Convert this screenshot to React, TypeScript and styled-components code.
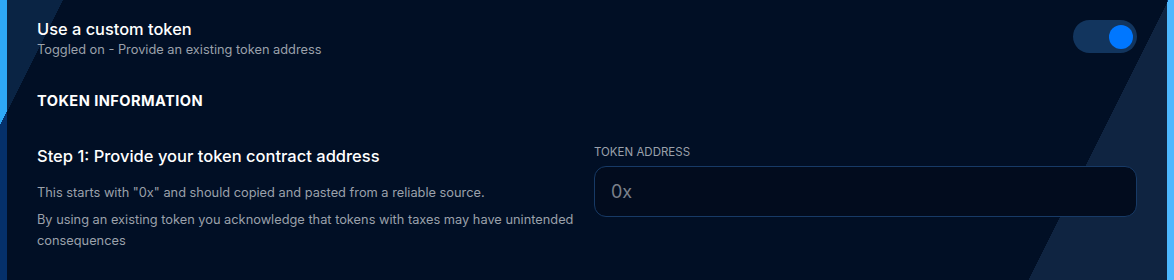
import styled, { createGlobalStyle } from 'styled-components';

const GlobalStyle = createGlobalStyle`
  html, body {
    margin: 0;
    padding: 0;
  }
  body {
    font-family: Inter, 'Noto Sans', sans-serif;
    background: #010f25;
  }
`;

const Page = styled.div`
  height: 280px;
  padding: 0 7px;
  overflow: hidden;
  background: linear-gradient(
    116.57deg,
    #2ea8f6 56px,
    #05306a 56px,
    #05306a 1045px,
    #4db8ff 1045px
  );
`;

const Panel = styled.section`
  height: 100%;
  box-sizing: border-box;
  padding: 19px 30px 0;
  color: #fff;
  background: linear-gradient(
    116.57deg,
    #0a2444 50px,
    #010f25 50px,
    #010f25 1039px,
    #0f2441 1039px
  );
`;

const ToggleRow = styled.div`
  display: flex;
  align-items: flex-start;
  justify-content: space-between;
`;

const Title = styled.h3`
  margin: 0;
  font-size: 16.4px;
  font-weight: 500;
  line-height: 20px;
`;

const Hint = styled.p`
  margin: 2px 0 0;
  font-size: 12.8px;
  line-height: 18px;
  color: #9ba1ab;
`;

const Switch = styled.button<{ $on: boolean }>`
  width: 64px;
  height: 33px;
  margin-top: 1px;
  padding: 0 4px;
  border: none;
  border-radius: 17px;
  background: #12355e;
  display: flex;
  align-items: center;
  justify-content: ${(p) => (p.$on ? 'flex-end' : 'flex-start')};
  cursor: pointer;

  &::after {
    content: '';
    width: 24px;
    height: 24px;
    border-radius: 50%;
    background: #0077ff;
  }
`;

const Section = styled.h4`
  margin: 32px 0 0;
  font-size: 14.6px;
  font-weight: 700;
  line-height: 20px;
  letter-spacing: 0.45px;
`;

const Columns = styled.div`
  display: grid;
  grid-template-columns: 1fr 1fr;
  column-gap: 14px;
  margin-top: 34px;
`;

const StepTitle = styled.h3`
  margin: 0;
  font-size: 16.5px;
  font-weight: 500;
  line-height: 22px;
`;

const Body = styled.p`
  margin: 15px 0 0;
  font-size: 12.8px;
  line-height: 21.5px;
  color: #9ba1ab;

  & + & {
    margin-top: 5px;
  }
`;

const Label = styled.label`
  display: block;
  font-size: 11.5px;
  line-height: 14px;
  text-transform: uppercase;
  color: #9ba1ab;
`;

const Input = styled.input`
  display: block;
  width: 100%;
  height: 51px;
  margin-top: 7px;
  box-sizing: border-box;
  padding: 0 16px;
  border: 1px solid #173a66;
  border-radius: 12px;
  background: #020c1e;
  color: #fff;
  font-family: inherit;
  font-size: 18px;
  outline: none;

  &::placeholder {
    color: #7a808a;
  }
`;

const App = () => {
  return (
    <>
      <GlobalStyle />
      <Page>
        <Panel>
          <ToggleRow>
            <div>
              <Title>Use a custom token</Title>
              <Hint>Toggled on - Provide an existing token address</Hint>
            </div>
            <Switch $on aria-label='Use a custom token' />
          </ToggleRow>

          <Section>TOKEN INFORMATION</Section>

          <Columns>
            <div>
              <StepTitle>Step 1: Provide your token contract address</StepTitle>
              <Body>
                This starts with "0x" and should copied and pasted from a
                reliable source.
              </Body>
              <Body>
                By using an existing token you acknowledge that tokens with
                taxes may have unintended consequences
              </Body>
            </div>
            <div>
              <Label htmlFor='token-address'>Token Address</Label>
              <Input id='token-address' placeholder='0x' />
            </div>
          </Columns>
        </Panel>
      </Page>
    </>
  );
};

export default App;
